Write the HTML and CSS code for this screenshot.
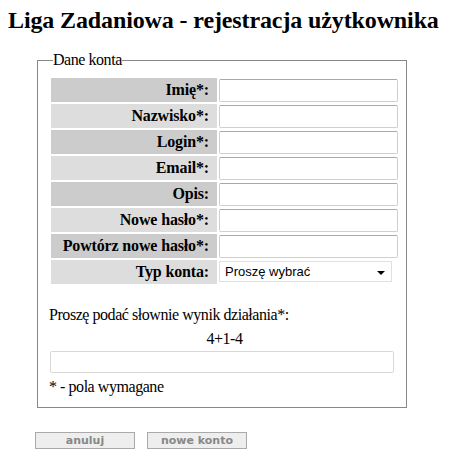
FILE: index.html
```html
<!DOCTYPE html>
<html lang="pl">
<head>
  <meta charset="UTF-8" />
  <title>Liga Zadaniowa - rejestracja użytkownika</title>
  <link rel="stylesheet" href="styles.css">
</head>
<body>
  <h1>Liga Zadaniowa - rejestracja użytkownika</h1>
  <form class="rejestracja">
    <fieldset>
      <legend>Dane konta</legend>
      <table class="dane">
        <tr class="nieparz"><th>Imię*:</th><td><input type="text"></td></tr>
        <tr class="parz"><th>Nazwisko*:</th><td><input type="text"></td></tr>
        <tr class="nieparz"><th>Login*:</th><td><input type="text"></td></tr>
        <tr class="parz"><th>Email*:</th><td><input type="text"></td></tr>
        <tr class="nieparz"><th>Opis:</th><td><input type="text"></td></tr>
        <tr class="parz"><th>Nowe hasło*:</th><td><input type="password"></td></tr>
        <tr class="nieparz"><th>Powtórz nowe hasło*:</th><td><input type="password"></td></tr>
        <tr class="parz"><th>Typ konta:</th><td class="typ">
          <div class="wybor">
            <span>Proszę wybrać</span>
            <span class="strzalka"></span>
          </div>
        </td></tr>
      </table>

      <p class="captcha">Proszę podać słownie wynik działania*:</p>
      <p class="dzialanie">4+1-4</p>
      <input type="text" class="wynik">
      <p class="uwaga">* - pola wymagane</p>
    </fieldset>

    <div class="przyciski">
      <button type="button">anuluj</button>
      <button type="button">nowe konto</button>
    </div>
  </form>
</body>
</html>
```

FILE: styles.css
```css
body {
  font-family: 'Liberation Serif', serif;
  font-size: 16px;
  letter-spacing: -0.45px;
  margin: 0;
  padding: 7px 8px 0 8px;
  color: #000;
  background: #fff;
}
h1 {
  font-size: 24px;
  letter-spacing: -0.12px;
  white-space: nowrap;
  margin: 0 0 18px 0;
  line-height: 26px;
}
.rejestracja {
  margin-left: 29px;
}
fieldset {
  width: 351px;
  margin: 0;
  padding: 0 6px 0 11px;
  border: 1px solid #888;
}
legend {
  padding: 0;
  margin-left: 4px;
  line-height: 18px;
}
.dane {
  border-spacing: 2px;
  margin-top: 7px;
}
.dane th {
  width: 158px;
  height: 24px;
  padding: 0 8px 0 0;
  text-align: right;
  font-weight: bold;
  letter-spacing: -0.15px;
}
.dane td {
  padding: 0;
  width: 179px;
}
.dane td.typ {
  vertical-align: top;
  padding-top: 1px;
}
.nieparz th {
  background: #cccccc;
}
.parz th {
  background: #dddddd;
}
input {
  box-sizing: border-box;
  width: 179px;
  height: 23px;
  border: 1px solid #cfcfcf;
  border-top-color: #a8a8a8;
  border-radius: 2px;
  margin: 0;
  display: block;
}
.wybor {
  box-sizing: border-box;
  width: 173px;
  height: 21px;
  border: 1px solid #e0e0e0;
  background: #fff;
  display: flex;
  align-items: center;
  justify-content: space-between;
  padding: 0 6px 0 5px;
  font-family: 'Liberation Sans', Arial, sans-serif;
  font-size: 13px;
  letter-spacing: 0;
}
.strzalka {
  width: 0;
  height: 0;
  border-left: 4px solid transparent;
  border-right: 4px solid transparent;
  border-top: 4px solid #000;
  margin-top: 2px;
}
.captcha {
  margin: 20px 0 0 0;
  line-height: 18px;
}
.dzialanie {
  margin: 6px 0 0 0;
  text-align: center;
  line-height: 18px;
}
input.wynik {
  width: 344px;
  height: 22px;
  margin: 3px 0 0 1px;
  border-color: #d8d8d8;
}
.uwaga {
  margin: 5px 0 11px 0;
  line-height: 18px;
}
.przyciski {
  display: flex;
  gap: 12px;
  margin: 24px 0 0 -2px;
}
button {
  width: 100px;
  height: 17px;
  padding: 0;
  background: #eeeeee;
  border: 1px solid #aaaaaa;
  color: #888888;
  font-family: 'DejaVu Sans', Verdana, sans-serif;
  font-weight: bold;
  font-size: 11px;
  line-height: 15px;
  letter-spacing: 0;
}
```
